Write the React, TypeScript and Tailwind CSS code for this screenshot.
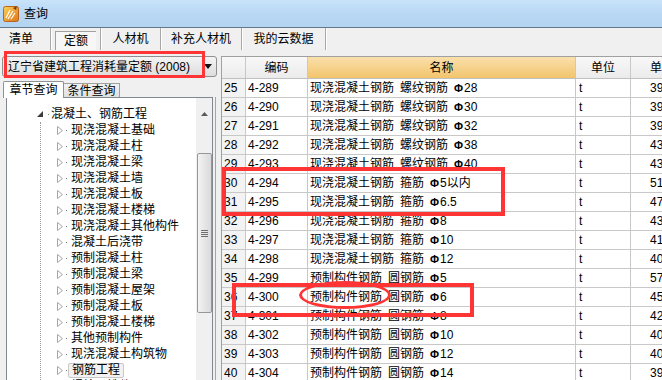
import React from 'react';

type Row = [number, string, string, string, string, string];

const rows: Row[] = [
  [25, '4-289', '现浇混凝土钢筋', '螺纹钢筋', '28', '39'],
  [26, '4-290', '现浇混凝土钢筋', '螺纹钢筋', '30', '39'],
  [27, '4-291', '现浇混凝土钢筋', '螺纹钢筋', '32', '39'],
  [28, '4-292', '现浇混凝土钢筋', '螺纹钢筋', '38', '43'],
  [29, '4-293', '现浇混凝土钢筋', '螺纹钢筋', '40', '43'],
  [30, '4-294', '现浇混凝土钢筋', '箍筋', '5以内', '51'],
  [31, '4-295', '现浇混凝土钢筋', '箍筋', '6.5', '47'],
  [32, '4-296', '现浇混凝土钢筋', '箍筋', '8', '43'],
  [33, '4-297', '现浇混凝土钢筋', '箍筋', '10', '41'],
  [34, '4-298', '现浇混凝土钢筋', '箍筋', '12', '40'],
  [35, '4-299', '预制构件钢筋', '圆钢筋', '5', '57'],
  [36, '4-300', '预制构件钢筋', '圆钢筋', '6', '45'],
  [37, '4-301', '预制构件钢筋', '圆钢筋', '8', '42'],
  [38, '4-302', '预制构件钢筋', '圆钢筋', '10', '40'],
  [39, '4-303', '预制构件钢筋', '圆钢筋', '12', '40'],
  [40, '4-304', '预制构件钢筋', '圆钢筋', '14', '39'],
];

const treeItems = [
  '现浇混凝土基础',
  '现浇混凝土柱',
  '现浇混凝土梁',
  '现浇混凝土墙',
  '现浇混凝土板',
  '现浇混凝土楼梯',
  '现浇混凝土其他构件',
  '混凝土后浇带',
  '预制混凝土柱',
  '预制混凝土梁',
  '预制混凝土屋架',
  '预制混凝土板',
  '预制混凝土楼梯',
  '其他预制构件',
  '现浇混凝土构筑物',
  '钢筋工程',
  '螺栓、铁件',
];

const topTabs = [
  { label: '清单', w: 'w-[51px] justify-start pl-[9px]' },
  { label: '定额', w: 'w-[50px] justify-center', active: true },
  { label: '人材机', w: 'w-[60px] justify-center' },
  { label: '补充人材机', w: 'w-[81px] justify-center' },
  { label: '我的云数据', w: 'w-[84px] justify-center' },
];

function AppIcon() {
  return (
    <svg width="16" height="17" viewBox="0 0 16 17">
      <defs>
        <linearGradient id="ig" x1="0" y1="0" x2="1" y2="1">
          <stop offset="0" stopColor="#fbd35a" />
          <stop offset="1" stopColor="#e0731c" />
        </linearGradient>
      </defs>
      <rect x="0.5" y="1.5" width="15" height="15" rx="2" fill="url(#ig)" stroke="#b8651a" />
      <path d="M3 13 L7 5 M5 14 L10 6 M8 14 L12 8" stroke="#fff" strokeWidth="1.2" />
      <path d="M10 3 L14 1 L13 5 Z" fill="#7a3b12" />
    </svg>
  );
}

function Phi() {
  return <span className="inline-block w-[10px] font-bold text-[11px] leading-none">Φ</span>;
}

export default function App() {
  return (
    <div className="relative w-[662px] h-[380px] overflow-hidden bg-[#f0f0f0] flex flex-col text-[12px] text-black font-['Liberation_Sans','Noto_Sans_CJK_SC',sans-serif]">
      {/* 标题栏 */}
      <div className="h-[28px] shrink-0 flex items-center gap-[5px] pl-[3px] bg-gradient-to-b from-[#c8e3fa] via-[#b9d8f4] to-[#b3d3f0] border-b border-[#66768a]">
        <AppIcon />
        <span className="text-[12px] leading-none">查询</span>
      </div>

      {/* 顶部页签 */}
      <div className="h-[22px] shrink-0 flex">
        {topTabs.map((t) => (
          <div
            key={t.label}
            className={`${t.w} shrink-0 h-full flex items-center border-r border-[#a8a8a8] shadow-[1px_0_0_#fff]`}
          >
            {t.active ? (
              <div className="w-[41px] h-[19px] mt-[3px] flex items-center justify-center bg-[#f7f7f7] border-t border-l border-[#a0a0a0]">
                定额
              </div>
            ) : (
              <span>{t.label}</span>
            )}
          </div>
        ))}
      </div>

      <div className="flex flex-1 min-h-0">
        {/* 左侧 */}
        <div className="w-[221px] shrink-0 flex flex-col">
          <div className="mt-[6px] ml-[2px] w-[215px] h-[21px] shrink-0 flex items-center justify-between pl-[5px] pr-[4px] rounded-[3px] border border-[#8e8f8f] bg-gradient-to-b from-[#f4f4f4] to-[#dddddd]">
            <span className="leading-none">辽宁省建筑工程消耗量定额 (2008)</span>
            <svg width="8" height="5" viewBox="0 0 8 5">
              <path d="M0 0 H8 L4 5 Z" fill="#111" />
            </svg>
          </div>

          <div className="h-[20px] shrink-0 flex items-end ml-[3px]">
            <div className="w-[61px] h-[17px] flex items-center justify-center bg-white border border-b-0 border-[#8e9196] rounded-t-[2px] relative top-[1px]">
              章节查询
            </div>
            <div className="w-[56px] h-[14px] flex items-center justify-center bg-gradient-to-b from-[#f2f2f2] to-[#e0e0e0] border border-b-0 border-l-0 border-[#a0a0a0]">
              条件查询
            </div>
          </div>

          <div className="flex flex-1 min-h-0">
            <div className="ml-[6px] w-[207px] h-[400px] shrink-0 border border-[#828790] bg-white flex">
              <div className="flex-1 min-w-0 pt-[8px] overflow-hidden">
                <div className="h-[16px] flex items-center pl-[30px]">
                  <svg width="6" height="6" viewBox="0 0 6 6">
                    <path d="M6 0 V6 H0 Z" fill="#3c3c3c" />
                  </svg>
                  <span className="w-[1px] h-[1px] bg-[#808080] ml-[5px]" />
                  <span className="ml-[2px] leading-[16px]">混凝土、钢筋工程</span>
                </div>
                <div className="ml-[33px] border-l border-dotted border-[#9a9a9a]">
                  {treeItems.map((name, i) => (
                    <div key={name} className="h-[16px] flex items-center pl-[16px]">
                      <svg width="6" height="9" viewBox="0 0 6 9">
                        <path d="M0.5 0.5 L5.5 4.5 L0.5 8.5 Z" fill="#fff" stroke="#a6a6a6" />
                      </svg>
                      <span className="w-[1px] h-[1px] bg-[#808080] ml-[3px]" />
                      {i === 15 ? (
                        <span className="ml-[1px] px-[3px] h-[15px] flex items-center bg-[#f2f2f2] border border-[#c8c8c8] rounded-[2px] leading-none">
                          {name}
                        </span>
                      ) : (
                        <span className="ml-[4px] leading-[16px] whitespace-nowrap">{name}</span>
                      )}
                    </div>
                  ))}
                </div>
              </div>
              {/* 滚动条 */}
              <div className="w-[16px] shrink-0 bg-[#f0f0f0] flex flex-col items-center">
                <div className="h-[30px] flex items-center justify-center pt-[1px]">
                  <svg width="7" height="4" viewBox="0 0 7 4">
                    <path d="M3.5 0 L7 4 H0 Z" fill="#5a5a5a" />
                  </svg>
                </div>
                <div className="mt-[25px] w-[15px] h-[160px] rounded-[2px] border border-[#979797] bg-gradient-to-r from-[#f3f3f3] to-[#dadada] flex flex-col items-center justify-center gap-[1px]">
                  <span className="w-[7px] h-[1px] bg-[#6e6e6e]" />
                  <span className="w-[7px] h-[1px] bg-[#6e6e6e]" />
                  <span className="w-[7px] h-[1px] bg-[#6e6e6e]" />
                  <span className="w-[7px] h-[1px] bg-[#6e6e6e]" />
                </div>
              </div>
            </div>
            <div className="w-[8px] shrink-0 flex">
              <span className="ml-[2px] w-[1px] bg-[#a6a6a6]" />
            </div>
          </div>
        </div>

        {/* 右侧表格 */}
        <div className="flex-1 min-w-0 mt-[6px] border-l border-t border-[#a0a0a0] bg-white overflow-hidden">
          <div className="h-[22px] flex border-b border-[#c0c0c0]">
            <div className="w-[24px] shrink-0 border-r border-[#c8c8c8] bg-gradient-to-b from-[#f8f8f8] to-[#ebebeb]" />
            <div className="w-[62px] shrink-0 flex items-center justify-center border-r border-[#c8c8c8] bg-gradient-to-b from-[#f8f8f8] to-[#ebebeb]">
              编码
            </div>
            <div className="w-[268px] shrink-0 flex items-center justify-center border-r border-[#c8c8c8] bg-gradient-to-b from-[#fae0ab] to-[#f2c46b]">
              名称
            </div>
            <div className="w-[55px] shrink-0 flex items-center justify-center border-r border-[#c8c8c8] bg-gradient-to-b from-[#f8f8f8] to-[#ebebeb]">
              单位
            </div>
            <div className="w-[60px] shrink-0 flex items-center pl-[19px] bg-gradient-to-b from-[#f8f8f8] to-[#ebebeb] whitespace-nowrap">
              单价
            </div>
          </div>
          {rows.map(([n, code, prefix, kind, spec, price]) => (
            <div key={n} className="h-[19px] flex border-b border-[#c8c8c8]">
              <div className="w-[24px] shrink-0 pl-[2px] flex items-center border-r border-[#c8c8c8] bg-[#f3f3f3]">{n}</div>
              <div className="w-[62px] shrink-0 pl-[2px] flex items-center border-r border-[#c8c8c8]">{code}</div>
              <div className="w-[268px] shrink-0 pl-[2px] flex items-center border-r border-[#c8c8c8] whitespace-nowrap">
                <span>{prefix}</span>
                <span className="ml-[6px]">{kind}</span>
                <span className="ml-[6px] flex items-center">
                  <Phi />
                  <span>{spec}</span>
                </span>
              </div>
              <div className="w-[55px] shrink-0 pl-[3px] flex items-center border-r border-[#c8c8c8]">t</div>
              <div className="w-[60px] shrink-0 pl-[19px] flex items-center">{price}</div>
            </div>
          ))}
        </div>
      </div>

      {/* 红色标注 */}
      <div className="absolute left-[4px] top-[51px] w-[201px] h-[27px] border-[3px] border-[#ff3434] pointer-events-none" />
      <div className="absolute left-[222px] top-[167px] w-[283px] h-[49px] border-[4px] border-[#ff3434] pointer-events-none" />
      <div className="absolute left-[232px] top-[283px] w-[242px] h-[34px] border-[4px] border-[#ff3434] pointer-events-none" />
      <div className="absolute left-[299px] top-[281px] w-[92px] h-[28px] rounded-[50%] border-[3px] border-[#ff3434] pointer-events-none" />
    </div>
  );
}
